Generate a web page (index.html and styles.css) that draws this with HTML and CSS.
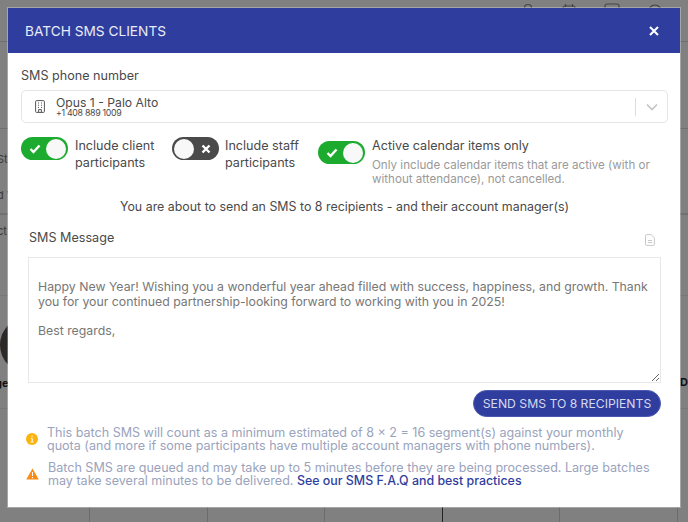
FILE: index.html
```html
<!DOCTYPE html>
<html lang="en">

<head>
    <meta charset="UTF-8">
    <meta name="viewport" content="width=device-width, initial-scale=1.0">
    <title>Batch SMS Clients</title>
    <link rel="stylesheet" href="styles.css">
</head>

<body>
    <!-- page behind the dialog, only the edges show -->
    <div class="behind">
        <div class="top-icons">
            <svg width="12" height="16" viewBox="0 0 12 16"><circle cx="6" cy="5" r="3.5" /></svg>
            <svg width="14" height="16" viewBox="0 0 14 16"><rect x="1" y="3" width="12" height="12" rx="2" /><path d="M3.5 1v3M10.5 1v3" /></svg>
            <svg width="16" height="16" viewBox="0 0 16 16"><rect x="1" y="1" width="14" height="12" rx="2" /></svg>
            <svg width="14" height="16" viewBox="0 0 14 16"><circle cx="7" cy="8" r="6" /></svg>
        </div>
        <span class="line" style="top: 41px"></span>
        <span class="line" style="top: 128px"></span>
        <span class="line thick" style="top: 213px"></span>
        <span class="line faint" style="top: 295px"></span>
        <span class="line faint" style="top: 408px"></span>
        <span class="frag" style="top: 152px">St</span>
        <span class="frag" style="top: 188px">d V</span>
        <span class="frag" style="top: 224px">ct</span>
        <span class="frag bold" style="top: 376px">ge</span>
        <span class="frag bold right" style="top: 375px">De</span>
        <span class="photo"></span>
        <div class="bottom-row">
            <span></span><span></span><span></span><span class="dark"></span><span></span><span></span>
        </div>
    </div>

    <div class="modal">
        <div class="modal-head">
            <h1>BATCH SMS CLIENTS</h1>
            <svg class="close" width="10" height="10" viewBox="0 0 10 10"><path d="M1 1l8 8M9 1l-8 8" /></svg>
        </div>

        <div class="modal-body">
            <label class="field-label">SMS phone number</label>
            <div class="select flex-between">
                <div class="select-value">
                    <svg class="building" width="10" height="13" viewBox="0 0 10 13">
                        <rect x="0.6" y="0.6" width="8.8" height="11.8" rx="1" />
                        <path d="M3 3h1M6 3h1M3 5.2h1M6 5.2h1M3 7.4h1M6 7.4h1M3.6 12.2V9.6h2.8v2.6" />
                    </svg>
                    <div>
                        <div class="select-name">Opus 1 - Palo Alto</div>
                        <div class="select-phone">+1 408 889 1009</div>
                    </div>
                </div>
                <div class="select-arrow">
                    <svg width="12" height="8" viewBox="0 0 12 8"><path d="M1 1.5l5 5 5-5" /></svg>
                </div>
            </div>

            <div class="options">
                <div class="option option-client">
                    <div class="toggle on">
                        <svg width="12" height="10" viewBox="0 0 12 10"><path d="M1.5 5l3 3 6-6.5" /></svg>
                        <span class="knob"></span>
                    </div>
                    <span>Include client participants</span>
                </div>
                <div class="option option-staff">
                    <div class="toggle off">
                        <span class="knob"></span>
                        <svg width="10" height="10" viewBox="0 0 10 10"><path d="M1.5 1.5l7 7M8.5 1.5l-7 7" /></svg>
                    </div>
                    <span>Include staff participants</span>
                </div>
                <div class="option option-active">
                    <div class="toggle on">
                        <svg width="12" height="10" viewBox="0 0 12 10"><path d="M1.5 5l3 3 6-6.5" /></svg>
                        <span class="knob"></span>
                    </div>
                    <div>
                        <div>Active calendar items only</div>
                        <p>Only include calendar items that are active (with or without attendance), not cancelled.</p>
                    </div>
                </div>
            </div>

            <div class="notice">You are about to send an SMS to 8 recipients - and their account manager(s)</div>

            <div class="message">
                <div class="message-head flex-between">
                    <label for="msg">SMS Message</label>
                    <svg width="10" height="12" viewBox="0 0 10 12">
                        <path d="M1.5.6h4.6l3.3 3.2v6.6a1 1 0 0 1-1 1H1.5a1 1 0 0 1-1-1V1.6a1 1 0 0 1 1-1z" />
                        <path d="M3 6.5h4M3 8.5h4" />
                    </svg>
                </div>
                <textarea id="msg">Happy New Year! Wishing you a wonderful year ahead filled with success, happiness, and growth. Thank you for your continued partnership-looking forward to working with you in 2025!

Best regards,</textarea>
                <div class="send-row">
                    <button type="button">SEND SMS TO 8 RECIPIENTS</button>
                </div>
            </div>

            <div class="hint hint-info">
                <svg width="12" height="12" viewBox="0 0 12 12">
                    <circle cx="6" cy="6" r="6" fill="#fbb40f" />
                    <path d="M6 2.6v1.4M4.9 5.4H6.2v3.4M4.6 9h3" stroke="#fff" fill="none" />
                </svg>
                <span>This batch SMS will count as a minimum estimated of 8 x 2 = 16 segment(s) against your monthly quota (and more if some participants have multiple account managers with phone numbers).</span>
            </div>
            <div class="hint">
                <svg width="13" height="12" viewBox="0 0 13 12">
                    <path d="M6.5 0.5l6.3 11H.2z" fill="#fb8c14" />
                    <path d="M6.5 4v4M6.5 9v1.2" stroke="#fff" fill="none" />
                </svg>
                <span>Batch SMS are queued and may take up to 5 minutes before they are being processed. Large batches may take several minutes to be delivered. <a href="#">See our SMS F.A.Q and best practices</a></span>
            </div>
        </div>
    </div>
</body>

</html>
```

FILE: styles.css
```css
* {
    padding: 0;
    margin: 0;
    box-sizing: border-box;
    font-family: Inter, "Liberation Sans", sans-serif;
}

body {
    height: 522px;
    overflow: hidden;
    background-color: #808080;
    position: relative;
}

.flex-between {
    display: flex;
    justify-content: space-between;
    align-items: center;
}

/* page behind */

.behind {
    position: absolute;
    inset: 0;
    overflow: hidden;
}

.top-icons {
    position: absolute;
    top: 3px;
    left: 522px;
    display: flex;
    gap: 28px;

    svg {
        fill: none;
        stroke: #444;
        stroke-width: 1.2;
    }
}

.line {
    position: absolute;
    left: 0;
    width: 100%;
    height: 1px;
    background-color: #6f6f6f;
}

.thick {
    height: 2px;
    background-color: #707070;
}

.faint {
    background-color: #777;
}

.frag {
    position: absolute;
    left: -3px;
    font-size: 11px;
    color: #3a3a3a;
}

.bold {
    font-weight: 700;
    color: #111;
    left: -5px;
}

.right {
    left: 680px;
}

.photo {
    position: absolute;
    top: 317px;
    left: 0;
    width: 56px;
    height: 56px;
    border-radius: 50%;
    background-color: #2c2827;
}

.bottom-row {
    position: absolute;
    left: 89px;
    top: 507px;
    display: flex;

    span {
        width: 117.5px;
        height: 15px;
        border-left: 1px solid #6c6c6c;
    }

    .dark {
        border-left-color: #222;
    }
}

/* dialog */

.modal {
    position: absolute;
    top: 8px;
    left: 8px;
    width: 672px;
    height: 499px;
    background-color: white;
    box-shadow: 0 0 0 1px rgba(255, 255, 255, 0.3);
}

.modal-head {
    height: 45px;
    padding: 0 21px 0 17px;
    background-color: #2f3e9e;
    display: flex;
    justify-content: space-between;
    align-items: center;

    h1 {
        font-size: 13.7px;
        font-weight: 400;
        color: #e8eaf6;
    }
}

.close {
    fill: none;
    stroke: white;
    stroke-width: 2;
}

.modal-body {
    padding: 15px 12px 0 13px;
    color: #4a4a4a;
    font-size: 12.6px;
}

.field-label {
    display: block;
    line-height: 16px;
}

.select {
    margin-top: 6px;
    height: 33px;
    border: 1px solid #e4e4e4;
    border-radius: 5px;
    padding-left: 13px;
}

.select-value {
    display: flex;
    align-items: center;
    gap: 11px;
}

.building {
    fill: none;
    stroke: #555;
    stroke-width: 1;
}

.select-name {
    font-size: 12.2px;
    line-height: 12px;
}

.select-phone {
    font-size: 8.8px;
    letter-spacing: -0.3px;
    line-height: 8px;
}

.select-arrow {
    width: 32px;
    height: 18px;
    border-left: 1px solid #dcdcdc;
    display: flex;
    justify-content: center;
    align-items: center;

    svg {
        fill: none;
        stroke: #c4c4c4;
        stroke-width: 1.6;
    }
}

.options {
    display: flex;
    margin-top: 14px;
    line-height: 17px;
}

.option {
    display: flex;
    align-items: flex-start;
    gap: 7px;

    p {
        margin-top: 4px;
        font-size: 11.6px;
        line-height: 14px;
        color: #9a9a9a;
    }
}

.option-client {
    width: 151px;
}

.option-staff {
    width: 146px;
    gap: 6px;
}

.option-active {
    flex: 1;
    padding-right: 8px;

    .toggle {
        margin-top: 4px;
    }
}

.toggle {
    flex: none;
    width: 47px;
    height: 23px;
    border-radius: 12px;
    padding: 0 2px 0 8px;
    display: flex;
    justify-content: space-between;
    align-items: center;

    svg {
        fill: none;
        stroke: white;
        stroke-width: 2.4;
    }
}

.on {
    background-color: #1dab2f;
}

.off {
    background-color: #4a4a4a;
    padding: 0 8px 0 2px;
}

.knob {
    width: 20px;
    height: 20px;
    border-radius: 50%;
    background-color: #f8f8f8;
}

.notice {
    margin-top: 13px;
    text-align: center;
    font-size: 12.4px;
    line-height: 16px;
}

.message {
    margin-top: 15px;
    padding: 0 7px 0 7px;
}

.message-head {
    padding: 0 6px 0 1px;
    line-height: 16px;

    svg {
        fill: none;
        stroke: #c8c8c8;
        stroke-width: 1;
        margin-top: 4px;
    }
}

textarea {
    display: block;
    width: 100%;
    height: 126px;
    margin-top: 11px;
    padding: 22px 6px 0 9px;
    border: 1px solid #e8e8e8;
    color: #777;
    font-size: 12.3px;
    line-height: 14.7px;
    outline: none;
}

.send-row {
    display: flex;
    justify-content: flex-end;
    margin-top: 7px;
}

button {
    width: 188px;
    height: 27px;
    border: 1px solid #4a58b0;
    border-radius: 14px;
    background-color: #2f3e9e;
    color: #d5d9ee;
    font-size: 12.2px;
    white-space: nowrap;
}

.hint {
    display: flex;
    align-items: center;
    gap: 9px;
    padding: 0 14px 0 5px;
    margin-top: 9px;
    font-size: 12.55px;
    line-height: 13px;
    color: #9aa3bd;

    svg {
        flex: none;
    }

    a {
        color: #2f3e9e;
        font-size: 12.4px;
        font-weight: 500;
        text-decoration: none;
    }
}
```
